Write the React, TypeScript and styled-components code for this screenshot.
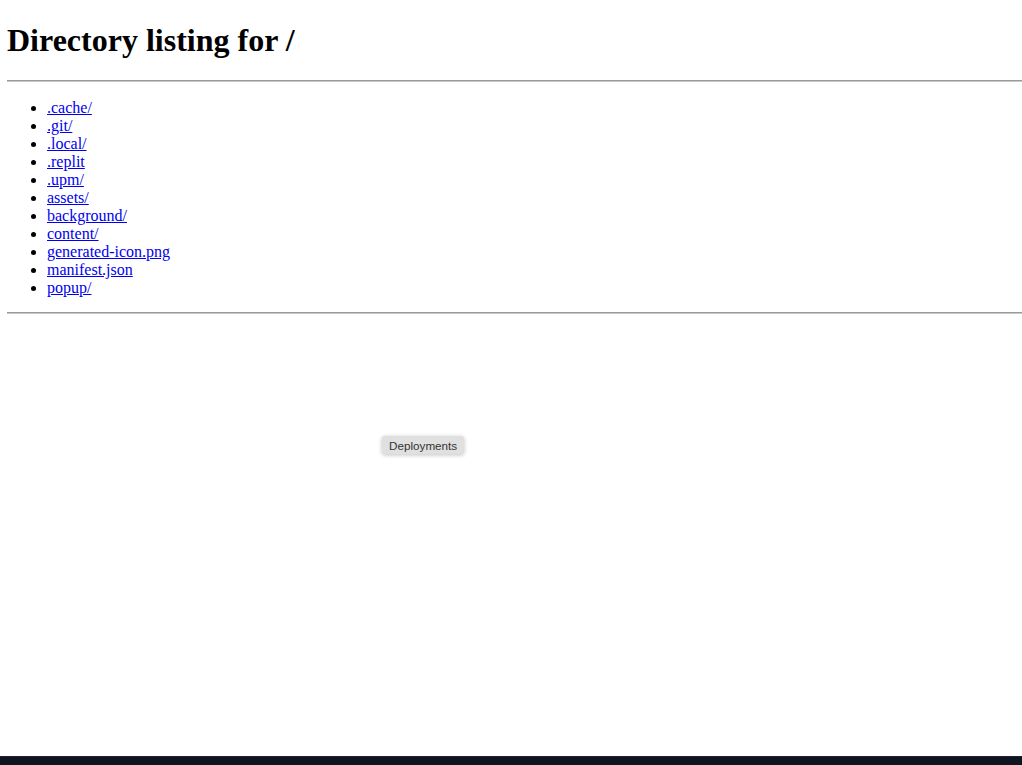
import React from "react";
import styled, { createGlobalStyle } from "styled-components";

const GlobalStyle = createGlobalStyle`
  html, body {
    background: #ffffff;
  }
  body {
    margin: 0 0 8px 7px;
    font-family: "Liberation Serif", "Times New Roman", serif;
    font-size: 16px;
    color: #000;
    overflow: hidden;
  }
`;

const Title = styled.h1`
  font-size: 32px;
  font-weight: 700;
  margin: 22px 0 21px 0;
  line-height: normal;
`;

const Rule = styled.hr`
  border: none;
  border-top: 1px solid #9a9a9a;
  border-bottom: 1px solid #c8c8c8;
  margin: 8px 0;
  height: 0;
`;

const FileList = styled.ul`
  margin: 17px 0 15px;
  padding-left: 40px;
  list-style: disc;
`;

const FileItem = styled.li`
  line-height: 18px;
`;

const FileLink = styled.a`
  color: #0000ee;
  text-decoration: underline;
`;

const Tooltip = styled.div`
  position: absolute;
  left: 382px;
  top: 436px;
  height: 18px;
  padding: 0 7px;
  display: flex;
  align-items: center;
  background: #e0e0e0;
  border-radius: 3px;
  box-shadow: 0 1px 4px rgba(0, 0, 0, 0.25);
  font-family: "Liberation Sans", Arial, sans-serif;
  font-size: 11.7px;
  color: #333;
  white-space: nowrap;
`;

const BottomBar = styled.div`
  position: fixed;
  left: 0;
  right: 0;
  bottom: 0;
  height: 8px;
  background: #0e1521;
  border-top: 1px solid #1c2333;
`;

const entries = [
  ".cache/",
  ".git/",
  ".local/",
  ".replit",
  ".upm/",
  "assets/",
  "background/",
  "content/",
  "generated-icon.png",
  "manifest.json",
  "popup/",
];

export default function App() {
  return (
    <>
      <GlobalStyle />
      <Title>Directory listing for /</Title>
      <Rule />
      <FileList>
        {entries.map((name) => (
          <FileItem key={name}>
            <FileLink href={name}>{name}</FileLink>
          </FileItem>
        ))}
      </FileList>
      <Rule />
      <Tooltip>Deployments</Tooltip>
      <BottomBar />
    </>
  );
}
